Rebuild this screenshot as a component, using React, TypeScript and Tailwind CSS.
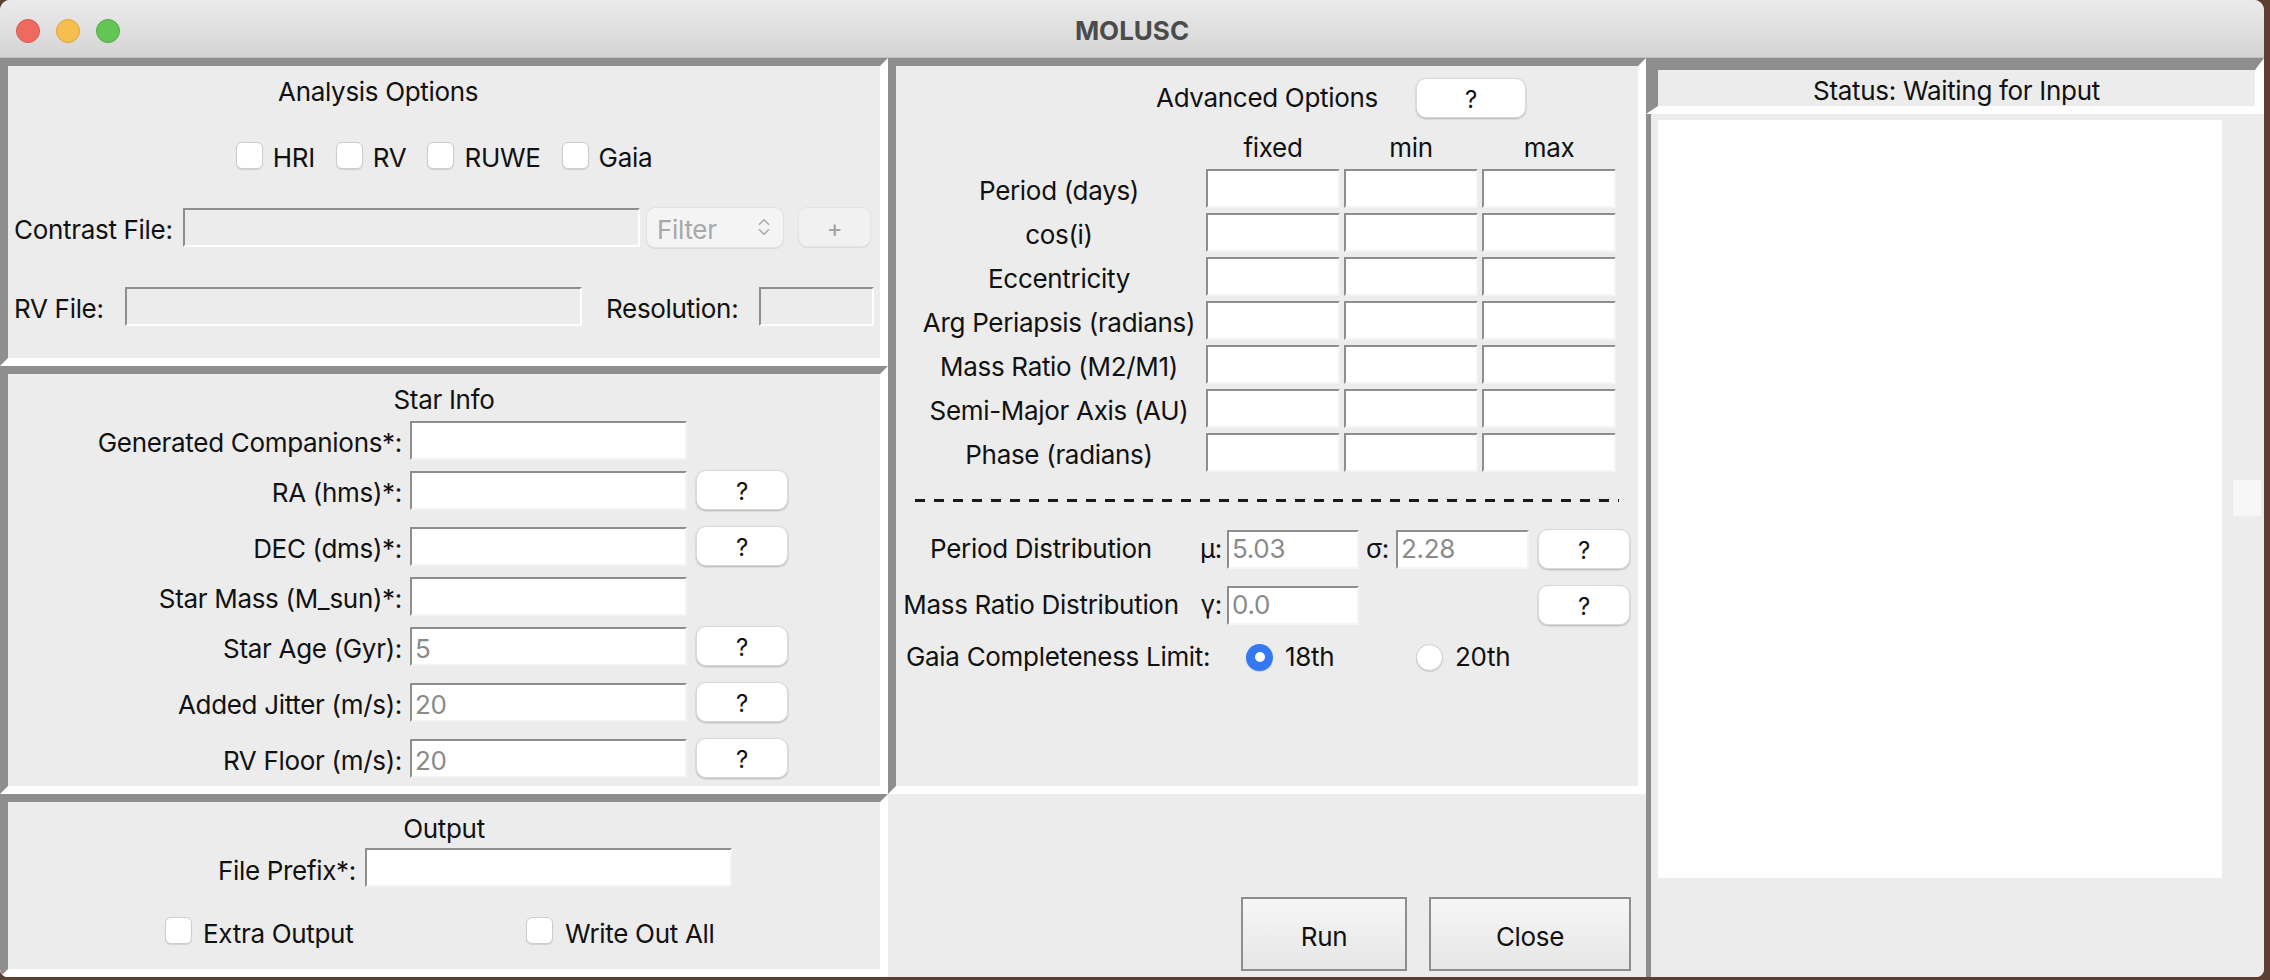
import React from "react";
import { ChevronsUpDown } from "lucide-react";

const sunken =
  "border-[8px] border-t-[#8e8e8e] border-l-[#8e8e8e] border-b-white border-r-white bg-[#ececec]";
const fieldBase =
  "h-[39px] border-2 border-t-[#8e8e8e] border-l-[#8e8e8e] border-b-[#f4f4f4] border-r-[#f4f4f4] bg-white pl-[3px] flex items-center text-[#8a8a8a] leading-none";
const field = `${fieldBase} pt-[5px]`;
const fieldOff =
  "h-[39px] border-2 border-t-[#8e8e8e] border-l-[#8e8e8e] border-b-white border-r-white bg-[#ececec]";

// labels sit a little low in the rows, as Tk draws them
const L = ({ className = "", children }: { className?: string; children: React.ReactNode }) => (
  <span className={`pt-[6px] ${className}`}>{children}</span>
);

const Help = ({ w = "w-[92px]" }: { w?: string }) => (
  <div
    className={`${w} h-[40px] shrink-0 rounded-[10px] bg-white border border-[#dadada] shadow-[0_1px_2px_rgba(0,0,0,0.25)] flex items-center justify-center pt-[4px] text-[24px] leading-none`}
  >
    ?
  </div>
);

const Check = () => (
  <div className="w-[27px] h-[27px] shrink-0 rounded-[6px] bg-white border border-[#cdcdcd] shadow-[0_1px_1px_rgba(0,0,0,0.12)]" />
);

const Radio = ({ on }: { on?: boolean }) =>
  on ? (
    <div className="w-[27px] h-[27px] shrink-0 rounded-full bg-[#3478f6] flex items-center justify-center shadow-[0_1px_1px_rgba(0,0,0,0.15)]">
      <div className="w-[10px] h-[10px] rounded-full bg-white" />
    </div>
  ) : (
    <div className="w-[27px] h-[27px] shrink-0 rounded-full bg-white border border-[#cdcdcd] shadow-[0_1px_1px_rgba(0,0,0,0.12)]" />
  );

const starRows: { label: string; value?: string; help: boolean }[] = [
  { label: "Generated Companions*:", help: false },
  { label: "RA (hms)*:", help: true },
  { label: "DEC (dms)*:", help: true },
  { label: "Star Mass (M_sun)*:", help: false },
  { label: "Star Age (Gyr):", value: "5", help: true },
  { label: "Added Jitter (m/s):", value: "20", help: true },
  { label: "RV Floor (m/s):", value: "20", help: true },
];

const orbitRows = [
  "Period (days)",
  "cos(i)",
  "Eccentricity",
  "Arg Periapsis (radians)",
  "Mass Ratio (M2/M1)",
  "Semi-Major Axis (AU)",
  "Phase (radians)",
];

const App = () => {
  return (
    <div className="w-[2270px] h-[980px] bg-[#5b4032] font-['Inter','Liberation_Sans',sans-serif] text-[26px] tracking-[-0.012em] text-[#111] leading-none">
      <div className="w-[2264px] h-[977px] rounded-t-[10px] rounded-b-[8px] overflow-hidden bg-[#ececec] flex flex-col">
        {/* title bar */}
        <div className="h-[58px] shrink-0 grid grid-cols-[1fr_auto_1fr] items-center bg-gradient-to-b from-[#ebebeb] to-[#d4d4d4] border-b border-[#bdbdbd]">
          <div className="flex items-center gap-[16px] pl-[16px] pt-[4px]">
            <div className="w-[24px] h-[24px] rounded-full bg-[#ee6a5f] border border-[#d9564b]" />
            <div className="w-[24px] h-[24px] rounded-full bg-[#f5be4f] border border-[#dea43a]" />
            <div className="w-[24px] h-[24px] rounded-full bg-[#62c554] border border-[#4fac42]" />
          </div>
          <div className="font-bold text-[#4b4b4b] text-[26px] tracking-normal pt-[4px]">MOLUSC</div>
          <div />
        </div>

        <div className="flex flex-1">
          {/* left column */}
          <div className="w-[888px] flex flex-col">
            <div className={`${sunken} h-[308px]`}>
              <div className="h-[50px] pl-[270px] pt-[2px] flex items-center">Analysis Options</div>
              <div className="h-[74px] pt-[4px] flex items-center justify-center gap-[21px]">
                {["HRI", "RV", "RUWE", "Gaia"].map((t) => (
                  <div key={t} className="flex items-center gap-[10px]">
                    <Check />
                    <L>{t}</L>
                  </div>
                ))}
              </div>
              <div className="h-[74px] flex items-center pl-[6px]">
                <L className="w-[169px] shrink-0">Contrast File:</L>
                <div className={`${fieldOff} w-[457px]`} />
                <div className="ml-[6px] w-[138px] h-[41px] rounded-[9px] bg-[#f4f4f4] border border-[#e2e2e2] shadow-[0_1px_1px_rgba(0,0,0,0.08)] flex items-center justify-between pl-[10px] pr-[8px] text-[#a8a8a8]">
                  <L>Filter</L>
                  <ChevronsUpDown size={22} strokeWidth={1.6} color="#a8a8a8" />
                </div>
                <div className="ml-[14px] w-[73px] h-[40px] rounded-[9px] bg-[#f1f1f1] border border-[#e4e4e4] shadow-[0_1px_1px_rgba(0,0,0,0.08)] flex items-center justify-center pt-[4px] text-[#a0a0a0] text-[24px]">
                  +
                </div>
              </div>
              <div className="h-[84px] flex items-center pl-[6px]">
                <L className="w-[111px] shrink-0">RV File:</L>
                <div className={`${fieldOff} w-[457px]`} />
                <L className="ml-[24px] w-[153px] shrink-0">Resolution:</L>
                <div className={`${fieldOff} w-[115px]`} />
              </div>
            </div>

            <div className={`${sunken} h-[428px]`}>
              <div className="h-[44px] pt-[13px] text-center leading-[26px]">Star Info</div>
              {starRows.map((r) => (
                <div key={r.label} className={`flex items-center ${r.help ? "h-[56px]" : "h-[44px]"}`}>
                  <L className="w-[394px] shrink-0 text-right">{r.label}</L>
                  <div className={`${field} ml-[8px] w-[277px]`}>{r.value}</div>
                  {r.help && (
                    <div className="ml-[9px]">
                      <Help />
                    </div>
                  )}
                </div>
              ))}
            </div>

            <div className={`${sunken} flex-1`}>
              <div className="h-[46px] pt-[14px] text-center leading-[26px]">Output</div>
              <div className="h-[39px] flex items-center">
                <L className="w-[348px] shrink-0 text-right">File Prefix*:</L>
                <div className={`${field} ml-[9px] w-[367px]`} />
              </div>
              <div className="mt-[30px] h-[27px] flex items-center pl-[157px]">
                <div className="w-[361px] flex items-center gap-[11px]">
                  <Check />
                  <L>Extra Output</L>
                </div>
                <div className="flex items-center gap-[12px]">
                  <Check />
                  <L>Write Out All</L>
                </div>
              </div>
            </div>
          </div>

          {/* middle column */}
          <div className="w-[758px] flex flex-col">
            <div className={`${sunken} h-[736px]`}>
              <div className="h-[64px] flex items-center pl-[260px]">
                <span className="w-[260px] shrink-0">Advanced Options</span>
                <Help w="w-[110px]" />
              </div>
              <div className="h-[36px] flex items-center pl-[310px] gap-[4px]">
                {["fixed", "min", "max"].map((h) => (
                  <span key={h} className="w-[134px] text-center">
                    {h}
                  </span>
                ))}
              </div>
              {orbitRows.map((r) => (
                <div key={r} className="h-[44px] flex items-center pl-[16px]">
                  <L className="w-[294px] shrink-0 text-center">{r}</L>
                  <div className="flex gap-[4px]">
                    <div className={`${field} w-[134px]`} />
                    <div className={`${field} w-[134px]`} />
                    <div className={`${field} w-[134px]`} />
                  </div>
                </div>
              ))}
              <div className="mt-[25px] mx-[19px] h-[3px] bg-[repeating-linear-gradient(90deg,#1a1a1a_0px,#1a1a1a_10px,transparent_10px,transparent_19px)]" />
              <div className="mt-[19px] h-[56px] flex items-center">
                <span className="w-[290px] shrink-0 text-center">Period Distribution</span>
                <span className="w-[36px] shrink-0 text-right">µ:</span>
                <div className={`${fieldBase} ml-[5px] w-[132px]`}>5.03</div>
                <span className="w-[30px] shrink-0 text-right">σ:</span>
                <div className={`${fieldBase} ml-[7px] w-[133px]`}>2.28</div>
                <div className="ml-[9px]">
                  <Help />
                </div>
              </div>
              <div className="h-[56px] flex items-center">
                <span className="w-[290px] shrink-0 text-center">Mass Ratio Distribution</span>
                <span className="w-[36px] shrink-0 text-right">γ:</span>
                <div className={`${fieldBase} ml-[5px] w-[132px]`}>0.0</div>
                <div className="ml-[179px]">
                  <Help />
                </div>
              </div>
              <div className="h-[48px] flex items-center">
                <span className="w-[340px] shrink-0 pl-[10px]">Gaia Completeness Limit:</span>
                <div className="ml-[10px] w-[170px] flex items-center gap-[12px]">
                  <Radio on />
                  <span>18th</span>
                </div>
                <div className="flex items-center gap-[12px]">
                  <Radio />
                  <span>20th</span>
                </div>
              </div>
            </div>
            <div className="flex-1 flex items-end justify-end gap-[22px] pr-[15px] pb-[6px]">
              <div className="w-[166px] h-[74px] pt-[6px] border-2 border-[#8e8e8e] bg-gradient-to-b from-[#f6f6f6] to-[#e6e6e6] flex items-center justify-center">
                Run
              </div>
              <div className="w-[202px] h-[74px] pt-[6px] border-2 border-[#8e8e8e] bg-gradient-to-b from-[#f6f6f6] to-[#e6e6e6] flex items-center justify-center">
                Close
              </div>
            </div>
          </div>

          {/* right column */}
          <div className="w-[618px] flex flex-col">
            <div className="h-[56px] shrink-0 pt-[5px] border-t-[12px] border-l-[12px] border-b-[8px] border-r-[9px] border-t-[#8e8e8e] border-l-[#8e8e8e] border-b-white border-r-white bg-[#ececec] flex items-center justify-center">
              Status: Waiting for Input
            </div>
            <div className="flex-1 flex border-l-[5px] border-[#8e8e8e] pl-[7px] pt-[6px] bg-[#ececec]">
              <div className="w-[564px] h-[758px] bg-white" />
              <div className="ml-[11px] w-[28px]">
                <div className="mt-[360px] h-[36px] bg-[#f7f7f7]" />
              </div>
            </div>
          </div>
        </div>
      </div>
    </div>
  );
};

export default App;
